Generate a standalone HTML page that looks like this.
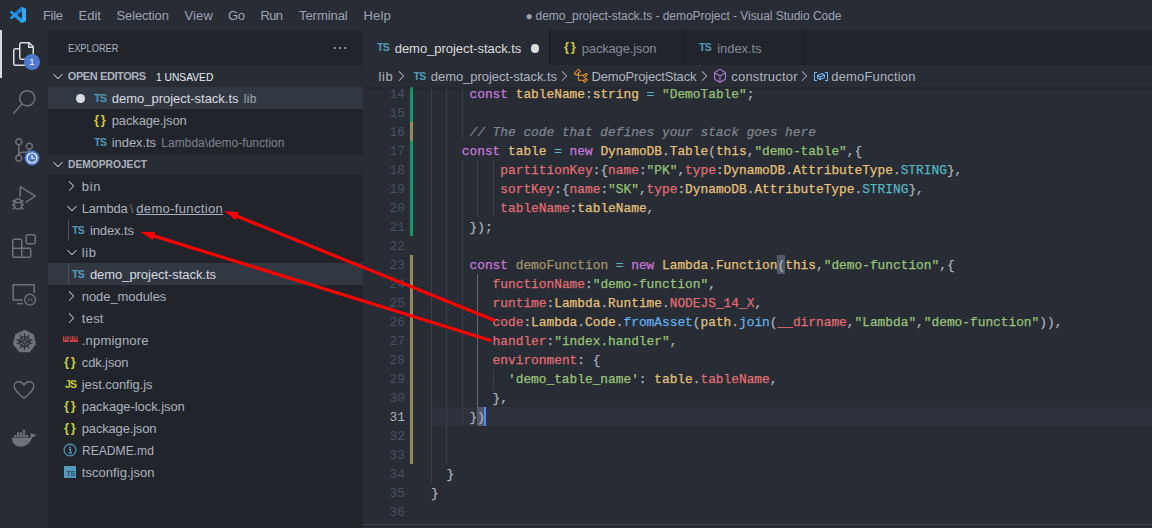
<!DOCTYPE html>
<html lang="en">
<head>
<meta charset="utf-8">
<title>demo_project-stack.ts - demoProject - Visual Studio Code</title>
<style>
*{box-sizing:border-box;margin:0;padding:0}
html,body{width:1152px;height:528px;overflow:hidden;background:#282c34}
body{position:relative;font-family:"Liberation Sans",sans-serif;font-size:13px;color:#abb2bf;-webkit-font-smoothing:antialiased}
.abs{position:absolute}
.t{position:absolute;white-space:nowrap;line-height:22px;height:22px}
/* regions */
#titlebar{left:0;top:0;width:1152px;height:30px;background:#282c34}
#activity{left:0;top:30px;width:48px;height:498px;background:#282c34}
#sidebar{left:48px;top:30px;width:315px;height:498px;background:#21252b}
#tabs{left:363px;top:30px;width:789px;height:35px;background:#21252b}
#crumbs{left:363px;top:65px;width:789px;height:22px;background:#282c34}
#editor{left:363px;top:87px;width:789px;height:437px;background:#282c34;overflow:hidden}
#panel{left:363px;top:524px;width:789px;height:4px;background:#282c34;border-top:1px solid #3e4452}
.menu{color:#9da5b4;top:5px;font-size:13px}
.sec{left:0;width:315px;height:22px;background:#282c34}
.row{left:0;width:315px;height:22px}
.sel{background:#323842}
.ico{position:absolute;white-space:nowrap;font-weight:bold;line-height:22px;height:22px}
.ts{color:#519aba;font-size:10.5px;letter-spacing:-0.7px}
.js{color:#cbcb41;font-size:10.5px;letter-spacing:-0.9px}
.br{color:#cbcb41;font-size:13px;letter-spacing:1.6px;margin-top:-0.5px}
.chev{position:absolute}
/* code */
.ln{position:absolute;left:0;width:42px;text-align:right;font-family:"Liberation Mono",monospace;font-size:12.83px;line-height:19px;height:19px;color:#495162}
.cl{-webkit-text-stroke:0.25px;position:absolute;left:68px;white-space:pre;font-family:"Liberation Mono",monospace;font-size:12.83px;line-height:19px;height:19px;color:#abb2bf}
.k{color:#c678dd}.v{color:#e5c07b}.s{color:#98c379}.p{color:#e06c75}.f{color:#61afef}.c{color:#56b6c2}.o{color:#d19a66}
.cm{color:#7f848e;font-style:italic}.u{color:#a39670}
.lna{color:#abb2bf}
.g{position:absolute;width:1px;background:#3b4048}
.ga{background:#626772}
.gut{position:absolute;left:47px;width:3px}
.add{background:#109868}.mod{background:#948b60}
</style>
<style id="fit">
#sb_explorer{transform:scaleX(0.8430);transform-origin:0 50%}
#sb_oe{letter-spacing:-0.413px}
#sb_un{transform:scaleX(0.9313);transform-origin:0 50%}
#oe1{letter-spacing:-0.024px}
#oe1d{letter-spacing:0.342px}
#oe2{letter-spacing:-0.157px}
#oe3{letter-spacing:-0.088px}
#oe3d{letter-spacing:0.024px}
#sb_dp{transform:scaleX(0.9311);transform-origin:0 50%}
#f_bin{letter-spacing:0.620px}
#f_lambda{letter-spacing:-0.217px}
#f_df{letter-spacing:0.334px}
#f_idx{letter-spacing:-0.088px}
#f_lib{letter-spacing:0.592px}
#f_stack{letter-spacing:-0.049px}
#f_nm{letter-spacing:-0.072px}
#f_test{letter-spacing:0.244px}
#f_npm{letter-spacing:0.184px}
#f_cdk{letter-spacing:-0.129px}
#f_jest{letter-spacing:-0.065px}
#f_pl{letter-spacing:-0.066px}
#f_pk{letter-spacing:-0.175px}
#f_rm{transform:scaleX(0.9304);transform-origin:0 50%}
#f_tsc{letter-spacing:0.045px}
#m1{letter-spacing:-0.318px}
#m2{letter-spacing:0.015px}
#m3{letter-spacing:-0.136px}
#m4{letter-spacing:0.116px}
#m5{letter-spacing:-0.444px}
#m6{letter-spacing:-0.730px}
#m7{letter-spacing:-0.061px}
#m8{letter-spacing:0.167px}
#ttl2{letter-spacing:-0.035px}
#tab1{letter-spacing:-0.029px}
#tab2{letter-spacing:-0.175px}
#tab3{letter-spacing:-0.088px}
#bc1{letter-spacing:0.642px}
#bc2{letter-spacing:-0.049px}
#bc3{letter-spacing:-0.184px}
#bc4{letter-spacing:0.189px}
#bc5{letter-spacing:0.164px}
</style>
</head>
<body>
<div id="titlebar" class="abs">
<svg class="abs" style="left:10px;top:7px" width="16" height="16" viewBox="0 0 100 100"><path fill="#2298ee" fill-rule="evenodd" d="M70.9119 99.3171C72.4869 99.9307 74.2828 99.8914 75.8725 99.1264L96.4608 89.2197C98.6242 88.1787 100 85.9892 100 83.5872V16.4133C100 14.0113 98.6243 11.8218 96.4609 10.7808L75.8725 0.873756C73.7862 -0.130129 71.3446 0.11576 69.5135 1.44695C69.252 1.63711 69.0028 1.84943 68.769 2.08341L29.3551 38.0415L12.1872 25.0096C10.589 23.7965 8.35363 23.8959 6.86933 25.2461L1.36303 30.2549C-0.452552 31.9064 -0.454633 34.7627 1.35853 36.417L16.2471 50.0001L1.35853 63.5832C-0.454633 65.2374 -0.452552 68.0938 1.36303 69.7453L6.86933 74.7541C8.35363 76.1043 10.589 76.2037 12.1872 74.9905L29.3551 61.9587L68.769 97.9167C69.3925 98.5406 70.1246 99.0104 70.9119 99.3171ZM75.0152 27.2989L45.1091 50.0001L75.0152 72.7012V27.2989Z"/><path fill="#1b7fd0" d="M69.5 1.4L75 0.5V27.3L45.1 50L29.4 38Z"/><path fill="#38a9f6" d="M75.0152 0.5 L96.4609 10.7808C98.6243 11.8218 100 14.0113 100 16.4133V83.5872C100 85.9892 98.6242 88.1787 96.4608 89.2197L75.8725 99.1264 L75.0152 99.5Z"/></svg>
<span class="t menu" id="m1" style="left:43px">File</span>
<span class="t menu" id="m2" style="left:78.5px">Edit</span>
<span class="t menu" id="m3" style="left:116.5px">Selection</span>
<span class="t menu" id="m4" style="left:184.5px">View</span>
<span class="t menu" id="m5" style="left:228px">Go</span>
<span class="t menu" id="m6" style="left:260.5px">Run</span>
<span class="t menu" id="m7" style="left:299px">Terminal</span>
<span class="t menu" id="m8" style="left:363.5px">Help</span>
<span class="t" id="ttl" style="left:525.5px;top:5px;font-size:12px;color:#9da5b4">&#9679;</span>
<span class="t" id="ttl2" style="left:535.5px;top:5px;font-size:12px;color:#9da5b4">demo_project-stack.ts - demoProject - Visual Studio Code</span>
</div>
<div id="activity" class="abs">
<div class="abs" style="left:0;top:0;width:2px;height:48px;background:#d7dae0"></div>
<svg class="abs" style="left:12px;top:12px" width="24" height="24" viewBox="0 0 24 24"><path fill="#d7dae0" d="M17.5 0h-9L7 1.5V6H2.5L1 7.5v15.07L2.5 24h12.07L16 22.57V18h4.7l1.3-1.43V4.5L17.5 0zm0 2.12l2.38 2.38H17.5V2.12zm-3 20.38h-12v-15H7v9.07L8.500 18h6v4.500zm6-6h-12v-15H16V6h4.500v10.500z"/></svg>
<div class="abs" style="left:24px;top:24px;width:16px;height:16px;border-radius:8px;background:#4d78cc;color:#f8fafd;font-size:9.500px;line-height:16.500px;text-align:center">1</div>
<svg class="abs" style="left:12px;top:60px" width="24" height="24" viewBox="0 0 24 24"><path fill="#6e7279" d="M15.25 0a8.25 8.25 0 0 0-6.18 13.72L1 22.88l1.12 1 8.05-9.12A8.251 8.251 0 1 0 15.25.01V0zm0 15a6.750 6.750 0 1 1 0-13.500 6.750 6.750 0 0 1 0 13.500z"/></svg>
<svg class="abs" style="left:12px;top:108px" width="24" height="24" viewBox="0 0 24 24"><path fill="#6e7279" d="M21.007 8.222A3.738 3.738 0 0 0 15.045 5.200a3.737 3.737 0 0 0 1.156 6.583 2.988 2.988 0 0 1-2.668 1.670h-2.990a4.456 4.456 0 0 0-2.989 1.165V7.400a3.737 3.737 0 1 0-1.494 0v9.117a3.776 3.776 0 1 0 1.816.099 2.990 2.990 0 0 1 2.668-1.667h2.990a4.484 4.484 0 0 0 4.223-3.039 3.736 3.736 0 0 0 3.250-3.687zM4.565 3.738a2.242 2.242 0 1 1 4.484 0 2.242 2.242 0 0 1-4.484 0zm4.484 16.441a2.242 2.242 0 1 1-4.484 0 2.242 2.242 0 0 1 4.484 0zm8.221-9.715a2.242 2.242 0 1 1 0-4.485 2.242 2.242 0 0 1 0 4.485z"/></svg>
<svg class="abs" style="left:24px;top:120px" width="16" height="16" viewBox="0 0 18 18"><circle cx="9" cy="9" r="8.5" fill="#4d78cc"/><circle cx="9" cy="9" r="5.600" fill="none" stroke="#f8fafd" stroke-width="1.300"/><path d="M9 5.600V9.300H12" fill="none" stroke="#f8fafd" stroke-width="1.300"/></svg>
<svg class="abs" style="left:12px;top:156px" width="24" height="24" viewBox="0 0 24 24"><path fill="#6e7279" d="M10.940 13.500l-1.320 1.320a3.730 3.730 0 0 0-7.240 0L1.060 13.500 0 14.560l1.720 1.720-.22.22V18H0v1.500h1.500v.08c.077.489.214.966.41 1.420L0 22.940 1.060 24l1.650-1.650A4.308 4.308 0 0 0 6 24a4.310 4.310 0 0 0 3.290-1.650L10.940 24 12 22.940 10.090 21c.198-.464.336-.951.41-1.450v-.1H12V18h-1.500v-1.500l-.22-.22L12 14.560l-1.060-1.060zM6 13.500a2.250 2.250 0 0 1 2.250 2.250h-4.500A2.250 2.250 0 0 1 6 13.500zm3 6a3.330 3.330 0 0 1-3 3 3.330 3.330 0 0 1-3-3v-2.250h6v2.250zm14.760-9.900v1.260L13.500 17.370V15.600l8.500-5.370L9 2v9.460a5.070 5.070 0 0 0-1.500-.72V.63L8.640 0l15.120 9.600z"/></svg>
<svg class="abs" style="left:12px;top:204px" width="24" height="24" viewBox="0 0 24 24"><path fill="#6e7279" d="M13.500 1.500L15 0h7.500L24 1.500V9l-1.500 1.500H15L13.500 9V1.500zm1.500 0V9h7.500V1.500H15zM0 15V6l1.500-1.500H9L10.500 6v7.500H18l1.500 1.500v7.500L18 24H1.500L0 22.500V15zm9-1.500V6H1.500v7.500H9zM9 15H1.500v7.500H9V15zm1.500 7.500H18V15h-7.500v7.500z"/></svg>
<svg class="abs" style="left:12px;top:252px" width="24" height="24" viewBox="0 0 24 24" fill="none" stroke="#6e7279" stroke-width="1.500"><path d="M11 18H1.250V2.750H22.250V11"/><path d="M5 21.600H11"/><circle cx="18" cy="17.700" r="6.900" fill="#282c34" stroke="none"/><circle cx="18" cy="17.700" r="5.400" stroke-width="1.400"/><path d="M15.600 16L17.200 17.700L15.600 19.400M20.400 16L18.800 17.700L20.400 19.400" stroke-width="1"/></svg>
<svg class="abs" style="left:11.600px;top:299.400px" width="25" height="25" viewBox="0 0 26 26"><path fill="#6e7279" d="M13 0.800 L22.600 5.400 L25 15.800 L18.350 24.200 H7.650 L1 15.800 L3.400 5.400Z"/><g fill="none" stroke="#282c34" stroke-width="1.300"><circle cx="13" cy="13.200" r="5.300"/><path d="M13 4.800V21.600M4.800 11.300L21.200 15.100M21.200 11.300L4.800 15.100M8.300 20L17.700 6.400M17.700 20L8.300 6.400" stroke-width="1.100"/></g><circle cx="13" cy="13.200" r="1.700" fill="#6e7279" stroke="#282c34" stroke-width="1"/></svg>
<svg class="abs" style="left:12px;top:348px" width="24" height="24" viewBox="0 0 24 24" fill="none" stroke="#6e7279" stroke-width="1.500"><path d="M12 20.400C5.500 15 2.250 11.900 2.250 8.200C2.250 5.500 4.300 3.750 6.700 3.750C8.800 3.750 10.800 4.900 12 7C13.200 4.900 15.200 3.750 17.300 3.750C19.700 3.750 21.750 5.500 21.750 8.200C21.750 11.900 18.500 15 12 20.400Z" stroke-linejoin="round" stroke-width="1.400"/></svg>
<svg class="abs" style="left:11px;top:396px" width="26" height="24" viewBox="0 0 26 24"><g fill="#6e7279"><path d="M0.800 11.800H19.300C19.800 10.600 19.800 9.200 19.200 8C20 7.100 21 6.900 21.600 8.200C22.800 7.900 24.200 8.300 24.900 9.200C24 10.600 22.600 11.200 21.200 11.100C19.800 16.600 15.800 20.700 9.600 20.700C4.200 20.700 1.100 17.400 0.800 11.800Z"/><rect x="3" y="9" width="2.500" height="2.300"/><rect x="5.9" y="9" width="2.500" height="2.300"/><rect x="8.8" y="9" width="2.500" height="2.300"/><rect x="11.7" y="9" width="2.500" height="2.300"/><rect x="14.6" y="9" width="2.500" height="2.300"/><rect x="5.9" y="6.400" width="2.500" height="2.300"/><rect x="8.8" y="6.400" width="2.500" height="2.300"/><rect x="11.7" y="6.400" width="2.500" height="2.300"/><rect x="11.700" y="3.800" width="2.500" height="2.300"/></g></svg>
</div>
<div id="sidebar" class="abs">
<span class="t" id="sb_explorer" style="left:19.8px;top:7px;color:#abb2bf;font-size:11px">EXPLORER</span>
<svg class="abs" style="left:284px;top:10px" width="16" height="16" viewBox="0 0 16 16" fill="#abb2bf"><circle cx="2.800" cy="8" r="1.100"/><circle cx="8" cy="8" r="1.100"/><circle cx="13.200" cy="8" r="1.100"/></svg>
<div class="abs sec" style="top:35px"></div>
<svg class="chev" style="left:2px;top:38px" width="16" height="16" viewBox="0 0 16 16"><path fill="#c3c8d1" d="M7.976 10.072l4.357-4.357.62.618L8.284 11h-.618L3 6.333l.619-.618 4.357 4.357z"/></svg>
<span class="t" id="sb_oe" style="left:19.8px;top:35px;color:#abb2bf;font-size:11px;font-weight:bold">OPEN EDITORS</span>
<span class="t" id="sb_un" style="left:107.8px;top:36px;color:#e9ebef;font-size:11px">1 UNSAVED</span>
<div class="abs row sel" style="top:57px"></div>
<div class="abs" style="left:28px;top:64px;width:8.500px;height:8.500px;border-radius:50%;background:#d7dae0"></div>
<span class="ico ts" style="left:46.2px;top:57px;">TS</span>
<span class="t" id="oe1" style="left:63.8px;top:58px;color:#d7dae0;">demo_project-stack.ts</span>
<span class="t" id="oe1d" style="left:195.8px;top:58px;color:#a0a6b1;font-size:12px">lib</span>
<span class="ico br" style="left:46px;top:79px;">{}</span>
<span class="t" id="oe2" style="left:63.8px;top:80px;color:#abb2bf;">package.json</span>
<span class="ico ts" style="left:46.2px;top:101px;">TS</span>
<span class="t" id="oe3" style="left:63.8px;top:102px;color:#abb2bf;">index.ts</span>
<span class="t" id="oe3d" style="left:113.3px;top:102px;color:#7d838e;font-size:12px">Lambda\demo-function</span>
<div class="abs sec" style="top:123px;border-top:1px solid #1e2227"></div>
<svg class="chev" style="left:2px;top:126px" width="16" height="16" viewBox="0 0 16 16"><path fill="#c3c8d1" d="M7.976 10.072l4.357-4.357.62.618L8.284 11h-.618L3 6.333l.619-.618 4.357 4.357z"/></svg>
<span class="t" id="sb_dp" style="left:19.8px;top:123px;color:#abb2bf;font-size:11px;font-weight:bold">DEMOPROJECT</span>
<svg class="chev" style="left:14.5px;top:148px" width="16" height="16" viewBox="0 0 16 16"><path fill="#c3c8d1" d="M10.072 8.024L5.715 3.667l.618-.62L11 7.716v.618L6.333 13l-.618-.619 4.357-4.357z"/></svg>
<span class="t" id="f_bin" style="left:33.8px;top:146px;color:#abb2bf;">bin</span>
<svg class="chev" style="left:15.5px;top:170px" width="16" height="16" viewBox="0 0 16 16"><path fill="#c3c8d1" d="M7.976 10.072l4.357-4.357.62.618L8.284 11h-.618L3 6.333l.619-.618 4.357 4.357z"/></svg>
<span class="t" id="f_lambda" style="left:33.8px;top:168px;color:#abb2bf;">Lambda</span>
<span class="t" id="f_bs" style="left:81.7px;top:168px;color:#6b717d;">\</span>
<span class="t" id="f_df" style="left:88.3px;top:168px;color:#abb2bf;text-decoration:underline;text-underline-offset:1px">demo-function</span>
<div class="abs" style="left:20px;top:189px;width:1px;height:22px;background:#4b5160"></div>
<span class="ico ts" style="left:24px;top:189px;">TS</span>
<span class="t" id="f_idx" style="left:41.9px;top:190px;color:#abb2bf;">index.ts</span>
<svg class="chev" style="left:15.5px;top:214px" width="16" height="16" viewBox="0 0 16 16"><path fill="#c3c8d1" d="M7.976 10.072l4.357-4.357.62.618L8.284 11h-.618L3 6.333l.619-.618 4.357 4.357z"/></svg>
<span class="t" id="f_lib" style="left:33.8px;top:212px;color:#abb2bf;">lib</span>
<div class="abs row sel" style="top:233px"></div>
<div class="abs" style="left:20px;top:233px;width:1px;height:22px;background:#4b5160"></div>
<span class="ico ts" style="left:24px;top:233px;">TS</span>
<span class="t" id="f_stack" style="left:41.9px;top:234px;color:#d7dae0;">demo_project-stack.ts</span>
<svg class="chev" style="left:14.5px;top:258px" width="16" height="16" viewBox="0 0 16 16"><path fill="#c3c8d1" d="M10.072 8.024L5.715 3.667l.618-.62L11 7.716v.618L6.333 13l-.618-.619 4.357-4.357z"/></svg>
<span class="t" id="f_nm" style="left:33.8px;top:256px;color:#abb2bf;">node_modules</span>
<svg class="chev" style="left:14.5px;top:280px" width="16" height="16" viewBox="0 0 16 16"><path fill="#c3c8d1" d="M10.072 8.024L5.715 3.667l.618-.62L11 7.716v.618L6.333 13l-.618-.619 4.357-4.357z"/></svg>
<span class="t" id="f_test" style="left:33.8px;top:278px;color:#abb2bf;">test</span>
<div class="abs" style="left:14.500px;top:306px;width:15.500px;height:5.500px;background:#cc3e44;color:#21252b;font-size:6.500px;font-weight:bold;line-height:4px;text-align:center;letter-spacing:0.6px;overflow:hidden;padding-left:1px">npm</div>
<span class="t" id="f_npm" style="left:33.8px;top:300px;color:#abb2bf;">.npmignore</span>
<span class="ico br" style="left:16px;top:321px;">{}</span>
<span class="t" id="f_cdk" style="left:33.8px;top:322px;color:#abb2bf;">cdk.json</span>
<span class="ico js" style="left:17px;top:343px;">JS</span>
<span class="t" id="f_jest" style="left:33.8px;top:344px;color:#abb2bf;">jest.config.js</span>
<span class="ico br" style="left:16px;top:365px;">{}</span>
<span class="t" id="f_pl" style="left:33.8px;top:366px;color:#abb2bf;">package-lock.json</span>
<span class="ico br" style="left:16px;top:387px;">{}</span>
<span class="t" id="f_pk" style="left:33.8px;top:388px;color:#abb2bf;">package.json</span>
<svg class="abs" style="left:15px;top:413px" width="14" height="14" viewBox="0 0 14 14"><circle cx="7" cy="7" r="5.900" fill="none" stroke="#519aba" stroke-width="1.200"/><path d="M5.600 6.200H7.500V10M5.500 10.200H9" fill="none" stroke="#519aba" stroke-width="1.300"/><rect x="6.200" y="3.300" width="1.500" height="1.600" fill="#519aba"/></svg>
<span class="t" id="f_rm" style="left:33.8px;top:410px;color:#abb2bf;">README.md</span>
<div class="abs" style="left:16px;top:436px;width:12px;height:12px;background:#519aba;color:#21252b;font-size:7px;line-height:16px;text-align:right;padding-right:1px;letter-spacing:-0.2px;overflow:hidden">TS</div>
<span class="t" id="f_tsc" style="left:33.8px;top:432px;color:#abb2bf;">tsconfig.json</span>
</div>
<div id="tabs" class="abs">
<div class="abs" style="left:0;top:0;width:186px;height:35px;background:#282c34"></div>
<div class="abs" style="left:186px;top:0;width:1px;height:35px;background:#181a1f"></div>
<div class="abs" style="left:321px;top:0;width:1px;height:35px;background:#181a1f"></div>
<div class="abs" style="left:441px;top:0;width:1px;height:35px;background:#181a1f"></div>
<span class="ico ts" style="left:14px;top:5.5px;">TS</span>
<span class="t" id="tab1" style="left:31.7px;top:8px;color:#dcdcdc;">demo_project-stack.ts</span>
<div class="abs" style="left:167.500px;top:14px;width:8.500px;height:8.500px;border-radius:50%;background:#dcdcdc"></div>
<span class="ico br" style="left:201px;top:6.5px;">{}</span>
<span class="t" id="tab2" style="left:218.8px;top:8px;color:#848b98;">package.json</span>
<span class="ico ts" style="left:336px;top:5.5px;">TS</span>
<span class="t" id="tab3" style="left:354.3px;top:8px;color:#848b98;">index.ts</span>
</div>
<div id="crumbs" class="abs">
<span class="t" id="bc1" style="left:15.5px;top:1px;color:#adb4c0;">lib</span>
<svg class="chev" style="left:29.5px;top:3px" width="16" height="16" viewBox="0 0 16 16"><path fill="#b4bac5" d="M10.072 8.024L5.715 3.667l.618-.62L11 7.716v.618L6.333 13l-.618-.619 4.357-4.357z"/></svg>
<span class="ico ts" style="left:50.5px;top:-0.5px;">TS</span>
<span class="t" id="bc2" style="left:67.8px;top:1px;color:#adb4c0;">demo_project-stack.ts</span>
<svg class="chev" style="left:192.8px;top:3px" width="16" height="16" viewBox="0 0 16 16"><path fill="#b4bac5" d="M10.072 8.024L5.715 3.667l.618-.62L11 7.716v.618L6.333 13l-.618-.619 4.357-4.357z"/></svg>
<svg class="abs" style="left:210px;top:3px" width="16" height="16" viewBox="0 0 16 16"><path fill="#ee9d28" d="M11.340 9.710h.71l2.670-2.670v-.71L13.380 5h-.7l-1.820 1.810h-5V5.560l1.860-1.850V3l-2-2H5L1 5v.71l2 2h.71l1.140-1.150v5.790l.5.500H10v.52l1.330 1.340h.71l2.670-2.670v-.71L13.370 10h-.7l-1.860 1.850h-5v-4H10v.48l1.340 1.380zm1.690-3.650l.63.630-2 2-.63-.63 2-2zm-8.960-.300L3.330 6.500 2 5.190l3.330-3.320 1.340 1.340-2.600 2.550zm9 5.300l.63.630-2 2-.63-.63 2-2z"/></svg>
<span class="t" id="bc3" style="left:228.6px;top:1px;color:#adb4c0;">DemoProjectStack</span>
<svg class="chev" style="left:333.2px;top:3px" width="16" height="16" viewBox="0 0 16 16"><path fill="#b4bac5" d="M10.072 8.024L5.715 3.667l.618-.62L11 7.716v.618L6.333 13l-.618-.619 4.357-4.357z"/></svg>
<svg class="abs" style="left:349px;top:3px" width="16" height="16" viewBox="0 0 16 16"><path fill="#b180d7" d="M13.510 4l-5-3h-1l-5 3-.49.860v6l.49.850 5 3h1l5-3 .49-.850v-6L13.510 4zm-6 9.560l-4.500-2.700V5.700l4.500 2.450v5.410zM3.270 4.700l4.740-2.840 4.740 2.840-4.740 2.590L3.270 4.700zm9.740 6.160l-4.500 2.700V8.150l4.500-2.450v5.160z"/></svg>
<span class="t" id="bc4" style="left:368.3px;top:1px;color:#adb4c0;">constructor</span>
<svg class="chev" style="left:433.2px;top:3px" width="16" height="16" viewBox="0 0 16 16"><path fill="#b4bac5" d="M10.072 8.024L5.715 3.667l.618-.62L11 7.716v.618L6.333 13l-.618-.619 4.357-4.357z"/></svg>
<svg class="abs" style="left:449.5px;top:3px" width="16" height="16" viewBox="0 0 16 16"><path fill="#75beff" d="M2 5h2V4H1.500l-.5.500v8l.5.500H4v-1H2V5zm12.500-1H12v1h2v7h-2v1h2.500l.5-.5v-8l-.5-.5zm-2.740 2.570L12 7v2.510l-.3.450-4.500 2h-.460l-2.500-1.500-.24-.430v-2.500l.3-.46 4.500-2h.46l2.500 1.500zM5 9.710l1.500.900V9.280L5 8.380v1.330zm.580-2.150l1.450.870 3.390-1.500-1.450-.870-3.390 1.500zm1.950 3.170l3.500-1.560V7.800l-3.500 1.560v1.370z"/></svg>
<span class="t" id="bc5" style="left:468.3px;top:1px;color:#adb4c0;">demoFunction</span>
</div>
<div id="editor" class="abs">
<div class="abs" style="left:68px;top:320px;width:721px;height:19px;background:#2c313c"></div>
<div class="gut add" style="top:-3px;height:38px"></div>
<div class="gut mod" style="top:35px;height:19px"></div>
<div class="gut add" style="top:54px;height:95px"></div>
<div class="gut mod" style="top:168px;height:209px"></div>
<div class="g" style="left:68.0px;top:-3px;height:19px"></div>
<div class="g" style="left:68.0px;top:16px;height:19px"></div>
<div class="g" style="left:68.0px;top:35px;height:19px"></div>
<div class="g" style="left:68.0px;top:54px;height:19px"></div>
<div class="g" style="left:68.0px;top:73px;height:19px"></div>
<div class="g" style="left:68.0px;top:92px;height:19px"></div>
<div class="g" style="left:68.0px;top:111px;height:19px"></div>
<div class="g" style="left:68.0px;top:130px;height:19px"></div>
<div class="g" style="left:68.0px;top:149px;height:19px"></div>
<div class="g" style="left:68.0px;top:168px;height:19px"></div>
<div class="g" style="left:68.0px;top:187px;height:19px"></div>
<div class="g" style="left:68.0px;top:206px;height:19px"></div>
<div class="g" style="left:68.0px;top:225px;height:19px"></div>
<div class="g" style="left:68.0px;top:244px;height:19px"></div>
<div class="g" style="left:68.0px;top:263px;height:19px"></div>
<div class="g" style="left:68.0px;top:282px;height:19px"></div>
<div class="g" style="left:68.0px;top:301px;height:19px"></div>
<div class="g" style="left:68.0px;top:320px;height:19px"></div>
<div class="g" style="left:68.0px;top:339px;height:19px"></div>
<div class="g" style="left:68.0px;top:358px;height:19px"></div>
<div class="g" style="left:68.0px;top:377px;height:19px"></div>
<div class="g" style="left:83.4px;top:-3px;height:19px"></div>
<div class="g" style="left:83.4px;top:16px;height:19px"></div>
<div class="g" style="left:83.4px;top:35px;height:19px"></div>
<div class="g" style="left:83.4px;top:54px;height:19px"></div>
<div class="g" style="left:83.4px;top:73px;height:19px"></div>
<div class="g" style="left:83.4px;top:92px;height:19px"></div>
<div class="g" style="left:83.4px;top:111px;height:19px"></div>
<div class="g" style="left:83.4px;top:130px;height:19px"></div>
<div class="g" style="left:83.4px;top:149px;height:19px"></div>
<div class="g" style="left:83.4px;top:168px;height:19px"></div>
<div class="g" style="left:83.4px;top:187px;height:19px"></div>
<div class="g" style="left:83.4px;top:206px;height:19px"></div>
<div class="g" style="left:83.4px;top:225px;height:19px"></div>
<div class="g" style="left:83.4px;top:244px;height:19px"></div>
<div class="g" style="left:83.4px;top:263px;height:19px"></div>
<div class="g" style="left:83.4px;top:282px;height:19px"></div>
<div class="g" style="left:83.4px;top:301px;height:19px"></div>
<div class="g" style="left:83.4px;top:320px;height:19px"></div>
<div class="g" style="left:83.4px;top:339px;height:19px"></div>
<div class="g" style="left:83.4px;top:358px;height:19px"></div>
<div class="g" style="left:98.8px;top:-3px;height:19px"></div>
<div class="g" style="left:98.8px;top:16px;height:19px"></div>
<div class="g" style="left:98.8px;top:35px;height:19px"></div>
<div class="g" style="left:98.8px;top:73px;height:19px"></div>
<div class="g" style="left:98.8px;top:92px;height:19px"></div>
<div class="g" style="left:98.8px;top:111px;height:19px"></div>
<div class="g" style="left:98.8px;top:130px;height:19px"></div>
<div class="g" style="left:98.8px;top:149px;height:19px"></div>
<div class="g" style="left:98.8px;top:168px;height:19px"></div>
<div class="g" style="left:98.8px;top:187px;height:19px"></div>
<div class="g" style="left:98.8px;top:206px;height:19px"></div>
<div class="g" style="left:98.8px;top:225px;height:19px"></div>
<div class="g" style="left:98.8px;top:244px;height:19px"></div>
<div class="g" style="left:98.8px;top:263px;height:19px"></div>
<div class="g" style="left:98.8px;top:282px;height:19px"></div>
<div class="g" style="left:98.8px;top:301px;height:19px"></div>
<div class="g" style="left:98.8px;top:320px;height:19px"></div>
<div class="g" style="left:114.2px;top:73px;height:19px"></div>
<div class="g" style="left:114.2px;top:92px;height:19px"></div>
<div class="g" style="left:114.2px;top:111px;height:19px"></div>
<div class="g ga" style="left:114.2px;top:187px;height:19px"></div>
<div class="g ga" style="left:114.2px;top:206px;height:19px"></div>
<div class="g ga" style="left:114.2px;top:225px;height:19px"></div>
<div class="g ga" style="left:114.2px;top:244px;height:19px"></div>
<div class="g ga" style="left:114.2px;top:263px;height:19px"></div>
<div class="g ga" style="left:114.2px;top:282px;height:19px"></div>
<div class="g ga" style="left:114.2px;top:301px;height:19px"></div>
<div class="g" style="left:129.6px;top:73px;height:19px"></div>
<div class="g" style="left:129.6px;top:92px;height:19px"></div>
<div class="g" style="left:129.6px;top:111px;height:19px"></div>
<div class="g" style="left:129.6px;top:282px;height:19px"></div>
<div class="abs" style="left:414.2px;top:168px;width:8px;height:19px;background:#515a6b"></div>
<div class="abs" style="left:113.9px;top:320px;width:7px;height:19px;background:#515a6b"></div>
<div class="abs" style="left:120.9px;top:320px;width:2px;height:19px;background:#528bff"></div>
<div class="ln" style="top:-2px">14</div>
<div class="cl" style="top:-2px">     <span class="k">const</span> <span class="v">tableName</span>:<span class="v">string</span> <span class="c">=</span> <span class="s">&quot;DemoTable&quot;</span>;</div>
<div class="ln" style="top:17px">15</div>
<div class="ln" style="top:36px">16</div>
<div class="cl" style="top:36px">     <span class="cm">// The code that defines your stack goes here</span></div>
<div class="ln" style="top:55px">17</div>
<div class="cl" style="top:55px">    <span class="k">const</span> <span class="v">table</span> <span class="c">=</span> <span class="k">new</span> <span class="v">DynamoDB</span>.<span class="v">Table</span>(<span class="v">this</span>,<span class="s">&quot;demo-table&quot;</span>,{</div>
<div class="ln" style="top:74px">18</div>
<div class="cl" style="top:74px">         <span class="p">partitionKey</span>:{<span class="p">name</span>:<span class="s">&quot;PK&quot;</span>,<span class="p">type</span>:<span class="v">DynamoDB</span>.<span class="v">AttributeType</span>.<span class="c">STRING</span>},</div>
<div class="ln" style="top:93px">19</div>
<div class="cl" style="top:93px">         <span class="p">sortKey</span>:{<span class="p">name</span>:<span class="s">&quot;SK&quot;</span>,<span class="p">type</span>:<span class="v">DynamoDB</span>.<span class="v">AttributeType</span>.<span class="c">STRING</span>},</div>
<div class="ln" style="top:112px">20</div>
<div class="cl" style="top:112px">         <span class="p">tableName</span>:<span class="v">tableName</span>,</div>
<div class="ln" style="top:131px">21</div>
<div class="cl" style="top:131px">     });</div>
<div class="ln" style="top:150px">22</div>
<div class="ln" style="top:169px">23</div>
<div class="cl" style="top:169px">     <span class="k">const</span> <span class="u">demoFunction</span> <span class="c">=</span> <span class="k">new</span> <span class="v">Lambda</span>.<span class="v">Function</span>(<span class="v">this</span>,<span class="s">&quot;demo-function&quot;</span>,{</div>
<div class="ln" style="top:188px">24</div>
<div class="cl" style="top:188px">        <span class="p">functionName</span>:<span class="s">&quot;demo-function&quot;</span>,</div>
<div class="ln" style="top:207px">25</div>
<div class="cl" style="top:207px">        <span class="p">runtime</span>:<span class="v">Lambda</span>.<span class="v">Runtime</span>.<span class="p">NODEJS_14_X</span>,</div>
<div class="ln" style="top:226px">26</div>
<div class="cl" style="top:226px">        <span class="p">code</span>:<span class="v">Lambda</span>.<span class="v">Code</span>.<span class="f">fromAsset</span>(<span class="v">path</span>.<span class="f">join</span>(<span class="p">__dirname</span>,<span class="s">&quot;Lambda&quot;</span>,<span class="s">&quot;demo-function&quot;</span>)),</div>
<div class="ln" style="top:245px">27</div>
<div class="cl" style="top:245px">        <span class="p">handler</span>:<span class="s">&quot;index.handler&quot;</span>,</div>
<div class="ln" style="top:264px">28</div>
<div class="cl" style="top:264px">        <span class="p">environment</span>: {</div>
<div class="ln" style="top:283px">29</div>
<div class="cl" style="top:283px">          <span class="s">'demo_table_name'</span>: <span class="v">table</span>.<span class="p">tableName</span>,</div>
<div class="ln" style="top:302px">30</div>
<div class="cl" style="top:302px">        },</div>
<div class="ln lna" style="top:321px">31</div>
<div class="cl" style="top:321px">     })</div>
<div class="ln" style="top:340px">32</div>
<div class="ln" style="top:359px">33</div>
<div class="ln" style="top:378px">34</div>
<div class="cl" style="top:378px">  }</div>
<div class="ln" style="top:397px">35</div>
<div class="cl" style="top:397px">}</div>
<div class="ln" style="top:416px">36</div>
<div class="abs" style="left:0;top:0;width:789px;height:5px;background:linear-gradient(rgba(0,0,0,0.12),rgba(0,0,0,0))"></div>
</div>
<div id="panel" class="abs"></div>
<svg id="arrows" class="abs" style="left:0;top:0" width="1152" height="528" viewBox="0 0 1152 528"><line x1="235.5" y1="215.6" x2="493.6" y2="320.1" stroke="#ff0000" stroke-width="3.2" stroke-linecap="round"/><polygon points="224.2,211.0 235.7,220.3 239.0,212.3" fill="#ff0000"/><line x1="152.0" y1="235.4" x2="489.8" y2="340.2" stroke="#ff0000" stroke-width="3.2" stroke-linecap="round"/><polygon points="140.3,231.8 152.6,240.1 155.1,231.9" fill="#ff0000"/></svg>
</body>
</html>
